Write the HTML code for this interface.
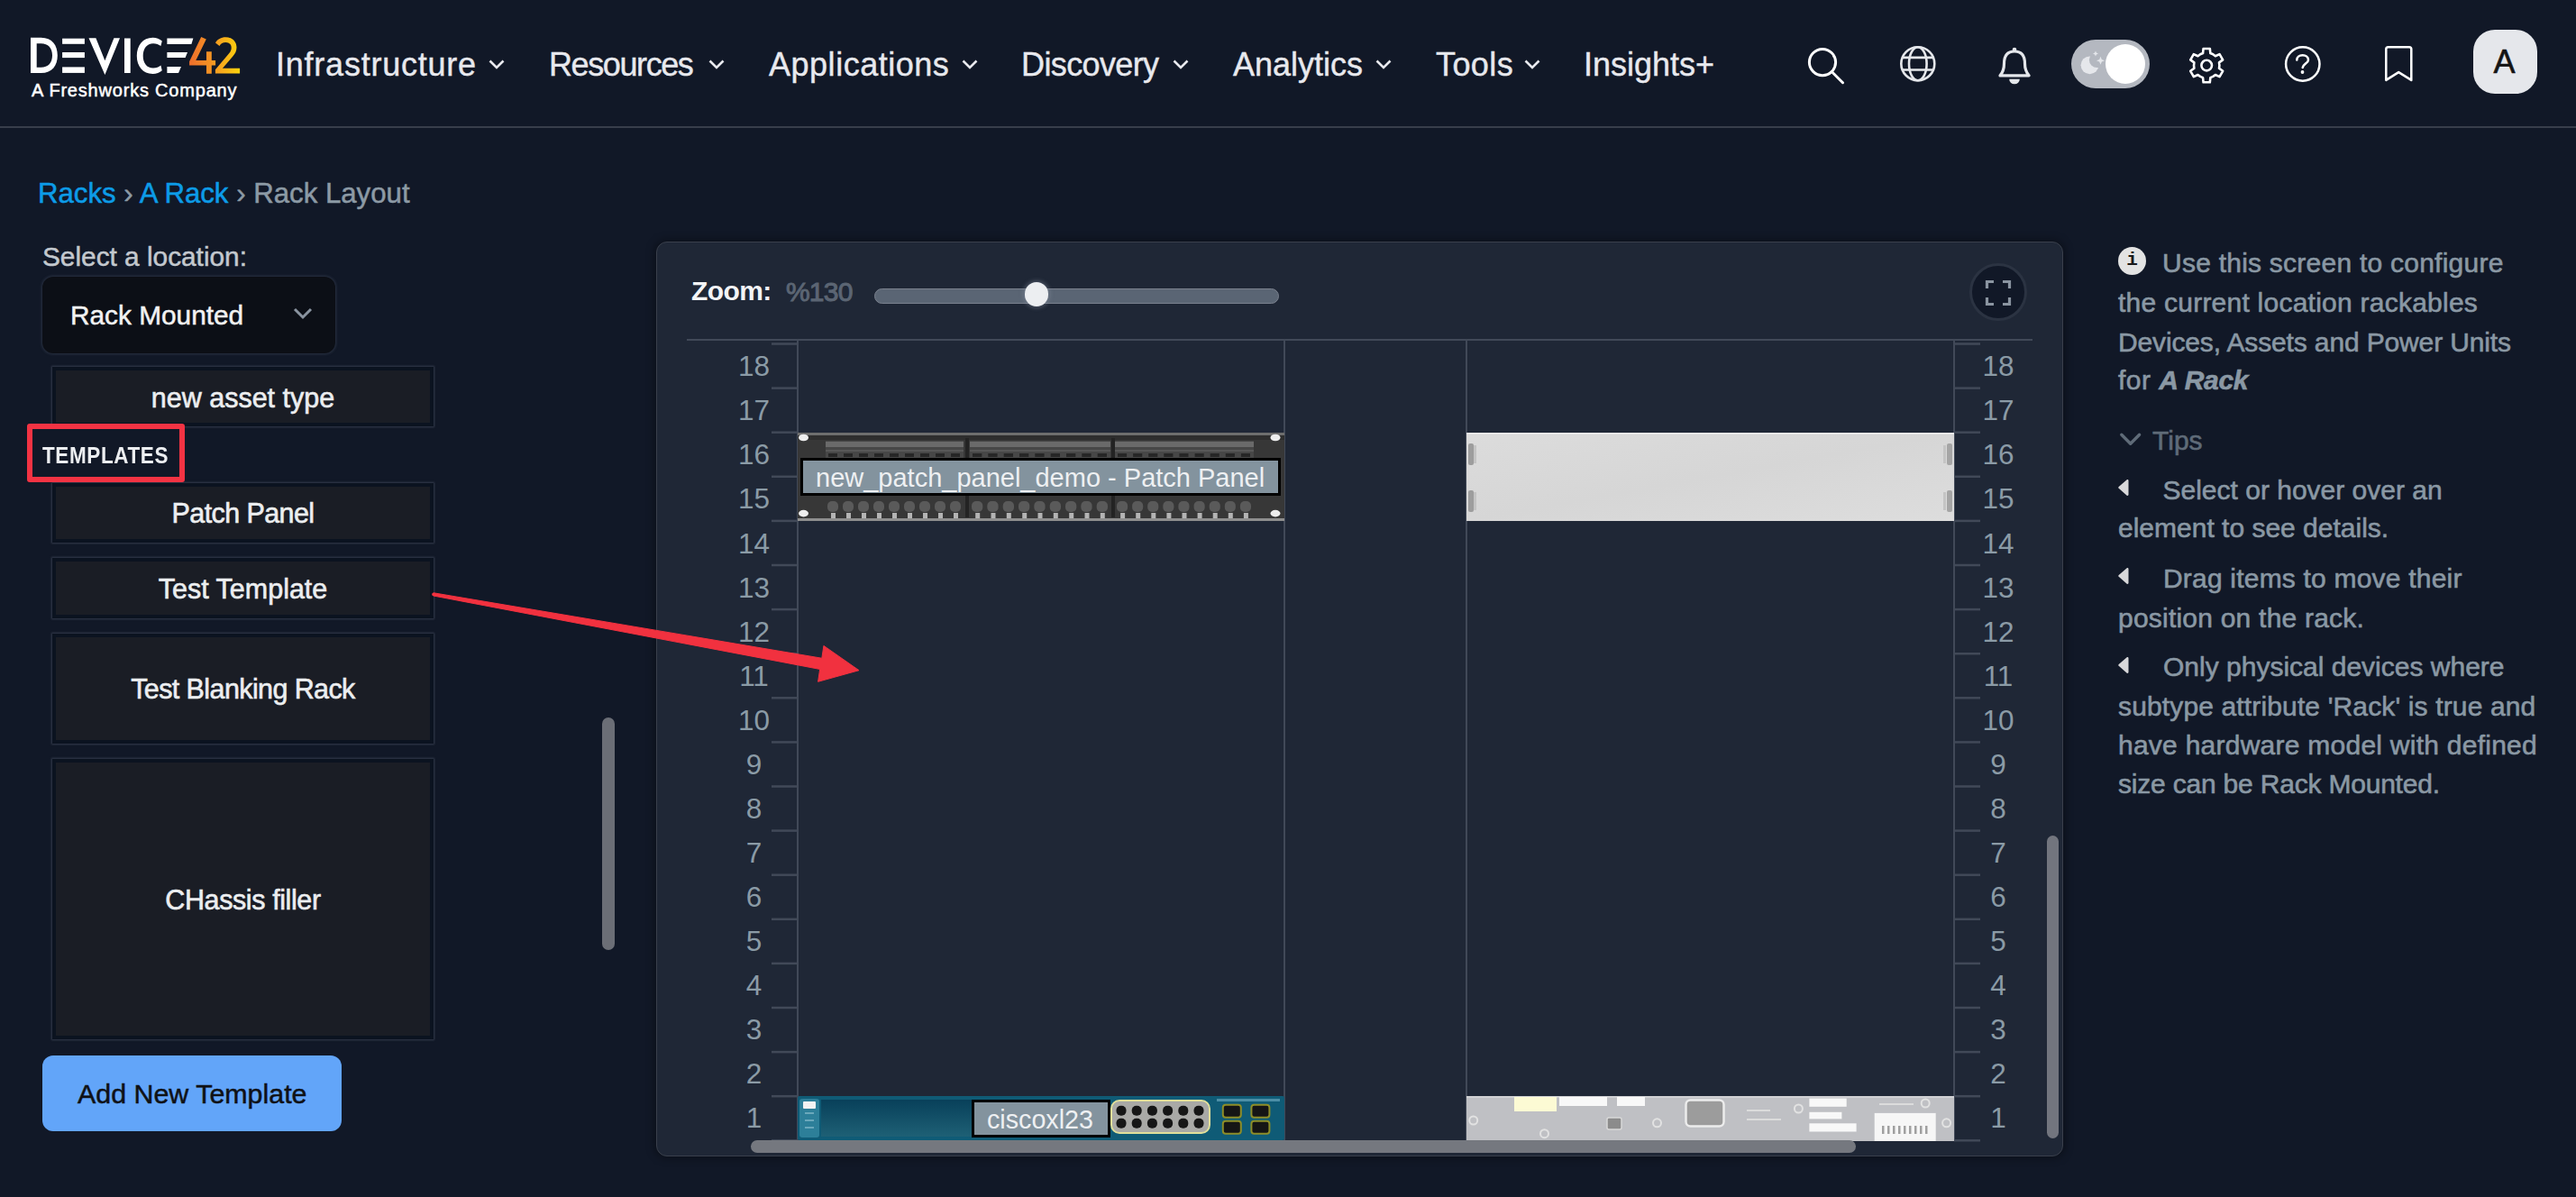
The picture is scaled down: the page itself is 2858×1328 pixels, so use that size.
<!DOCTYPE html>
<html><head><meta charset="utf-8">
<style>
*{box-sizing:border-box;margin:0;padding:0}
html,body{width:2858px;height:1328px;overflow:hidden;background:#111827;font-family:"Liberation Sans",sans-serif}
.a{position:absolute;white-space:nowrap}
.nav{font-size:36px;line-height:36px;color:#e8e9ee;top:53.5px;-webkit-text-stroke-width:0.4px}
.chev{position:absolute;top:66px;width:18px;height:11px}
.hdrline{position:absolute;left:0;top:140px;width:2858px;height:2px;background:#383e4b}
.item{position:absolute;left:58px;width:423px;background:#1a1d25;border:4px solid #0b1320;box-shadow:0 0 2px 1px rgba(85,95,115,0.5)}
.item span{position:absolute;left:0;right:0;text-align:center;font-size:30.5px;line-height:30px;color:#eceef0;white-space:nowrap;-webkit-text-stroke-width:0.6px}
.info{position:absolute;left:2350px;font-size:30px;line-height:30px;color:#8a98a4;white-space:nowrap;-webkit-text-stroke-width:0.6px}
</style></head><body>
<!-- HEADER -->
<svg class="a" style="left:0;top:0" width="280" height="120" viewBox="0 0 280 120">
  <defs><linearGradient id="g42" x1="210" y1="0" x2="266" y2="0" gradientUnits="userSpaceOnUse">
    <stop offset="0" stop-color="#ee6e2c"/><stop offset="0.5" stop-color="#f59a22"/><stop offset="1" stop-color="#fdd30d"/></linearGradient></defs>
  <g fill="#ffffff">
    <path d="M34 41.8h11.5c12.5 0 18.3 8.5 18.3 19.7s-5.8 19.6-18.3 19.6H34z M40.7 48.3v26.5h4.8c8 0 12.5-5.3 12.5-13.3s-4.5-13.2-12.5-13.2z" fill-rule="evenodd"/>
    <rect x="69.1" y="42.7" width="24.8" height="6.1"/>
    <rect x="69.1" y="58" width="24.8" height="6.1"/>
    <rect x="69.1" y="74.4" width="24.8" height="6.5"/>
    <path d="M98.5 42.2h7.9l10 25 10-25h6.6l-16.6 40.8z"/>
    <rect x="138" y="42.5" width="6.7" height="38.5"/>
    <path d="M179.8 45.5c-2.6-2.3-6.4-3.7-10.3-3.7c-11 0-17.7 8.7-17.7 20.1s6.7 20 17.7 20c3.9 0 7.7-1.3 10.3-3.7l-1.4-5.6c-2.2 1.9-5 2.9-8.4 2.9c-7 0-11.3-5.5-11.3-13.6s4.3-13.7 11.3-13.7c3.4 0 6.2 1 8.4 2.9z"/>
    <path d="M185.4 42.6h29l-2 6.3h-27z"/>
    <path d="M185.4 58h22.6l-2.4 6h-20.2z"/>
    <path d="M185.4 74.1h15.6l-3 6.8h-12.6z"/>
  </g>
  <g fill="url(#g42)">
    <path d="M223.2 41l5.6 2.4l-11.5 23.6h11.7v-9.8h5.8v9.8h4.3v5.6h-4.3v9.1h-5.8v-9.1h-18.9v-4.4z"/>
    <path d="M239 47.5c2.3-3.9 6.3-6.2 11.3-6.2c7.6 0 12.2 4.8 12.2 11.3c0 4-1.5 7-4.4 10.2l-11.2 12.9h19.2v5.8h-27.2v-4.2l14.8-17.5c2-2.3 3-4.4 3-6.9c0-3.6-2.5-6-6.4-6c-3.1 0-5.4 1.5-6.8 4z"/>
  </g>
</svg>
<div class="a" id="fresh" style="left:35px;top:90px;font-size:20px;line-height:20px;color:#fff;letter-spacing:0.8px;-webkit-text-stroke-width:0.5px">A Freshworks Company</div>

<div class="a nav" style="left:306px;letter-spacing:0.77px">Infrastructure</div>
<div class="a nav" style="left:609px;letter-spacing:-1.4px">Resources</div>
<div class="a nav" style="left:853px;letter-spacing:0.52px">Applications</div>
<div class="a nav" style="left:1133px;letter-spacing:-0.62px">Discovery</div>
<div class="a nav" style="left:1368px;letter-spacing:0px">Analytics</div>
<div class="a nav" style="left:1593px;letter-spacing:0.4px">Tools</div>
<div class="a nav" style="left:1757px;letter-spacing:0px">Insights+</div>
<svg class="chev" style="left:542px" viewBox="0 0 18 11"><path d="M1.5 1.5l7.5 7.5l7.5-7.5" fill="none" stroke="#e8e9ee" stroke-width="2.6"/></svg>
<svg class="chev" style="left:786px" viewBox="0 0 18 11"><path d="M1.5 1.5l7.5 7.5l7.5-7.5" fill="none" stroke="#e8e9ee" stroke-width="2.6"/></svg>
<svg class="chev" style="left:1067px" viewBox="0 0 18 11"><path d="M1.5 1.5l7.5 7.5l7.5-7.5" fill="none" stroke="#e8e9ee" stroke-width="2.6"/></svg>
<svg class="chev" style="left:1301px" viewBox="0 0 18 11"><path d="M1.5 1.5l7.5 7.5l7.5-7.5" fill="none" stroke="#e8e9ee" stroke-width="2.6"/></svg>
<svg class="chev" style="left:1526px" viewBox="0 0 18 11"><path d="M1.5 1.5l7.5 7.5l7.5-7.5" fill="none" stroke="#e8e9ee" stroke-width="2.6"/></svg>
<svg class="chev" style="left:1691px" viewBox="0 0 18 11"><path d="M1.5 1.5l7.5 7.5l7.5-7.5" fill="none" stroke="#e8e9ee" stroke-width="2.6"/></svg>


<!-- header icons -->
<svg class="a" style="left:1990px;top:40px" width="300" height="70" viewBox="1990 40 300 70">
  <g fill="none" stroke="#ffffff" stroke-width="3" stroke-linecap="round">
    <circle cx="2022" cy="69.1" r="14.6"/>
    <path d="M2033 80.2L2044.5 91.7"/>
  </g>
  <g fill="none" stroke="#e5e7eb" stroke-width="2.6">
    <circle cx="2127.8" cy="70.7" r="18.5"/>
    <ellipse cx="2127.8" cy="70.7" rx="9.8" ry="18.5"/>
    <path d="M2110 63.9H2145.6M2110 77.5H2145.6"/>
  </g>
  <g fill="none" stroke="#e5e7eb" stroke-width="3.2" stroke-linejoin="round">
    <path d="M2223.5 70.5c0-8.6 3.5-13.5 11.5-13.5s11.5 4.9 11.5 13.5c0 5.5 1.2 9.5 4.6 13.4H2219c3.4-3.9 4.5-7.9 4.5-13.4z"/>
  </g>
  <g fill="#e5e7eb">
    <circle cx="2235" cy="55" r="2.3"/>
    <path d="M2229.2 87.8h11.6a5.8 5.5 0 0 1-11.6 0z"/>
  </g>
</svg>
<div class="a" style="left:2298px;top:44px;width:87px;height:54px;border-radius:27px;background:#b4b8c0"></div>
<div class="a" style="left:2336px;top:49px;width:44px;height:44px;border-radius:50%;background:#ffffff"></div>
<svg class="a" style="left:2300px;top:50px" width="40" height="40" viewBox="2300 50 40 40">
  <defs><mask id="mm"><rect x="2300" y="50" width="40" height="40" fill="#fff"/><circle cx="2326.5" cy="66.5" r="8.6" fill="#000"/></mask></defs>
  <circle cx="2318.5" cy="72.3" r="9.9" fill="#e5e7eb" mask="url(#mm)"/>
  <path d="M2325 56.5l0.9 2.1l2.1 0.9l-2.1 0.9l-0.9 2.1l-0.9-2.1l-2.1-0.9l2.1-0.9z" fill="#e5e7eb"/>
  <path d="M2330.5 62.7l1.3 3.2l3.2 1.3l-3.2 1.3l-1.3 3.2l-1.3-3.2l-3.2-1.3l3.2-1.3z" fill="#e5e7eb"/>
</svg>
<svg class="a" style="left:2420px;top:45px" width="160" height="55" viewBox="2420 45 160 55">
  <g fill="none" stroke="#ffffff" stroke-width="2.6" stroke-linejoin="round">
    <path d="M2441.10 60.30 L2444.05 59.02 L2444.57 53.95 L2451.83 53.95 L2452.35 59.02 L2455.30 60.30 L2457.88 62.21 L2462.54 60.13 L2466.16 66.41 L2462.04 69.41 L2462.40 72.60 L2462.04 75.79 L2466.16 78.79 L2462.54 85.07 L2457.88 82.99 L2455.30 84.90 L2452.35 86.18 L2451.83 91.25 L2444.57 91.25 L2444.05 86.18 L2441.10 84.90 L2438.52 82.99 L2433.86 85.07 L2430.24 78.79 L2434.36 75.79 L2434.00 72.60 L2434.36 69.41 L2430.24 66.41 L2433.86 60.13 L2438.52 62.21Z"/>
    <circle cx="2448.2" cy="72.6" r="5.8"/>
  </g>
  <g fill="none" stroke="#ffffff" stroke-width="2.5" stroke-linecap="round">
    <circle cx="2554.8" cy="71" r="18.7"/>
    <path d="M2548.3 66.5c0-3.2 2.6-5.2 6.4-5.2c3.6 0 6.3 2.1 6.3 5.1c0 3.8-5.8 4.4-6.3 8.6"/>
  </g>
  <circle cx="2554.5" cy="80" r="1.9" fill="#ffffff"/>
</svg>
<svg class="a" style="left:2640px;top:45px" width="45" height="52" viewBox="2640 45 45 52">
  <path d="M2647.3 88.9V54.5a2.3 2.3 0 0 1 2.3-2.3h23.4a2.3 2.3 0 0 1 2.3 2.3V88.9L2661.2 80.1z" fill="none" stroke="#ffffff" stroke-width="2.5" stroke-linejoin="round"/>
</svg>
<div class="a" style="left:2744px;top:33px;width:71px;height:71px;border-radius:24px;background:#e5e7eb"></div>
<div class="a" style="left:2743px;top:50.5px;width:71px;text-align:center;font-size:36px;line-height:36px;color:#141414;-webkit-text-stroke-width:0.6px">A</div>
<div class="hdrline"></div>

<!-- BREADCRUMB -->
<div class="a" style="left:42px;top:199px;font-size:31.2px;line-height:31.2px;color:#0c9ce8;-webkit-text-stroke-width:0.5px">Racks <span style="color:#8c9aa5">›</span> A Rack <span style="color:#8c9aa5">› Rack Layout</span></div>

<!-- LEFT PANEL -->
<div class="a" style="left:47px;top:270px;font-size:29.8px;line-height:29.8px;color:#c3c8ce;-webkit-text-stroke-width:0.5px">Select a location:</div>
<div class="a" style="left:47px;top:307px;width:325px;height:85px;border-radius:12px;background:#0c0f16;box-shadow:0 0 3px 1px rgba(90,100,120,0.35)"></div>
<div class="a" style="left:78px;top:335px;font-size:29.8px;line-height:29.8px;color:#f2f2f2;-webkit-text-stroke-width:0.5px">Rack Mounted</div>
<svg class="a" style="left:324px;top:340px" width="24" height="18" viewBox="0 0 24 18"><path d="M3 3l9 9l9-9" fill="none" stroke="#8a94a0" stroke-width="3"/></svg>

<div class="item" style="top:407px;height:66px"><span style="top:15px">new asset type</span></div>
<div class="item" style="top:536px;height:66px"><span style="top:14px;letter-spacing:-0.6px">Patch Panel</span></div>
<div class="item" style="top:619px;height:67px"><span style="top:15px">Test Template</span></div>
<div class="item" style="top:703px;height:122px"><span style="top:42px;letter-spacing:-0.6px">Test Blanking Rack</span></div>
<div class="item" style="top:842px;height:311px"><span style="top:137px;letter-spacing:-0.4px">CHassis filler</span></div>

<div class="a" style="left:30px;top:470px;width:175px;height:65px;border:6px solid #f43343;border-radius:3px"></div>
<div class="a" style="left:47px;top:495px;font-size:22.5px;line-height:24px;font-weight:bold;color:#f3f4f6;letter-spacing:0.6px;transform:scaleY(1.12);transform-origin:0 20px;color:#eceef1">TEMPLATES</div>

<div class="a" style="left:47px;top:1171px;width:332px;height:84px;border-radius:12px;background:#62a5f9"></div>
<div class="a" style="left:86px;top:1198px;font-size:30.4px;line-height:30.4px;color:#0f1115;-webkit-text-stroke-width:0.5px">Add New Template</div>

<div class="a" style="left:668px;top:796px;width:14px;height:258px;border-radius:7px;background:#6b6e76"></div>

<!-- RACK PANEL -->
<div class="a" style="left:728px;top:268px;width:1561px;height:1015px;border-radius:12px;background:#1f2736;border:1px solid #3a404c;box-shadow:0 0 10px 2px rgba(0,0,0,0.35)"></div>
<div class="a" style="left:767px;top:307.5px;font-size:30px;line-height:30px;font-weight:bold;color:#f3f4f6;letter-spacing:-0.6px">Zoom:</div>
<div class="a" style="left:872px;top:309px;font-size:30px;line-height:30px;color:#5b6573;-webkit-text-stroke-width:1px;letter-spacing:-0.8px">%130</div>
<div class="a" style="left:970px;top:320px;width:449px;height:17px;border-radius:9px;background:#5a6574;border:1.5px solid #7a818e"></div>
<div class="a" style="left:1136.5px;top:313px;width:26.5px;height:26.5px;border-radius:50%;background:#eceef1;box-shadow:0 0 4px 2px rgba(140,150,165,0.35)"></div>
<div class="a" style="left:2185px;top:292px;width:64px;height:64px;border-radius:50%;background:#111827;border:3px solid #2b3342"></div>
<svg class="a" style="left:2200px;top:308px" width="34" height="34" viewBox="0 0 34 34"><path d="M4.5 12V4.5H12M22 4.5H29.5V12M29.5 22V29.5H22M12 29.5H4.5V22" fill="none" stroke="#8a94a0" stroke-width="3.2"/></svg>
<svg class="a" style="left:0;top:0" width="2858" height="1328" viewBox="0 0 2858 1328">
<g fill="#414958">
<rect x="762" y="376" width="1493" height="2"/>
<rect x="884" y="378" width="2" height="888"/>
<rect x="1424" y="378" width="2" height="888"/>
<rect x="1626" y="378" width="2" height="888"/>
<rect x="2167" y="378" width="2" height="888"/>
<rect x="856" y="380.25" width="29" height="2.5"/>
<rect x="2168" y="380.25" width="29" height="2.5"/>
<rect x="856" y="429.35" width="29" height="2.5"/>
<rect x="2168" y="429.35" width="29" height="2.5"/>
<rect x="856" y="478.45" width="29" height="2.5"/>
<rect x="2168" y="478.45" width="29" height="2.5"/>
<rect x="856" y="527.55" width="29" height="2.5"/>
<rect x="2168" y="527.55" width="29" height="2.5"/>
<rect x="856" y="576.65" width="29" height="2.5"/>
<rect x="2168" y="576.65" width="29" height="2.5"/>
<rect x="856" y="625.75" width="29" height="2.5"/>
<rect x="2168" y="625.75" width="29" height="2.5"/>
<rect x="856" y="674.85" width="29" height="2.5"/>
<rect x="2168" y="674.85" width="29" height="2.5"/>
<rect x="856" y="723.95" width="29" height="2.5"/>
<rect x="2168" y="723.95" width="29" height="2.5"/>
<rect x="856" y="773.05" width="29" height="2.5"/>
<rect x="2168" y="773.05" width="29" height="2.5"/>
<rect x="856" y="822.15" width="29" height="2.5"/>
<rect x="2168" y="822.15" width="29" height="2.5"/>
<rect x="856" y="871.25" width="29" height="2.5"/>
<rect x="2168" y="871.25" width="29" height="2.5"/>
<rect x="856" y="920.35" width="29" height="2.5"/>
<rect x="2168" y="920.35" width="29" height="2.5"/>
<rect x="856" y="969.45" width="29" height="2.5"/>
<rect x="2168" y="969.45" width="29" height="2.5"/>
<rect x="856" y="1018.55" width="29" height="2.5"/>
<rect x="2168" y="1018.55" width="29" height="2.5"/>
<rect x="856" y="1067.65" width="29" height="2.5"/>
<rect x="2168" y="1067.65" width="29" height="2.5"/>
<rect x="856" y="1116.75" width="29" height="2.5"/>
<rect x="2168" y="1116.75" width="29" height="2.5"/>
<rect x="856" y="1165.85" width="29" height="2.5"/>
<rect x="2168" y="1165.85" width="29" height="2.5"/>
<rect x="856" y="1214.95" width="29" height="2.5"/>
<rect x="2168" y="1214.95" width="29" height="2.5"/>
<rect x="856" y="1264.05" width="29" height="2.5"/>
<rect x="2168" y="1264.05" width="29" height="2.5"/>
</g>
<g fill="#8b9ba6" font-family="Liberation Sans" font-size="31.5" text-anchor="middle">
<text x="836.5" y="417.30">18</text>
<text x="2217" y="417.30">18</text>
<text x="836.5" y="466.36">17</text>
<text x="2217" y="466.36">17</text>
<text x="836.5" y="515.42">16</text>
<text x="2217" y="515.42">16</text>
<text x="836.5" y="564.48">15</text>
<text x="2217" y="564.48">15</text>
<text x="836.5" y="613.54">14</text>
<text x="2217" y="613.54">14</text>
<text x="836.5" y="662.60">13</text>
<text x="2217" y="662.60">13</text>
<text x="836.5" y="711.66">12</text>
<text x="2217" y="711.66">12</text>
<text x="836.5" y="760.72">11</text>
<text x="2217" y="760.72">11</text>
<text x="836.5" y="809.78">10</text>
<text x="2217" y="809.78">10</text>
<text x="836.5" y="858.84">9</text>
<text x="2217" y="858.84">9</text>
<text x="836.5" y="907.90">8</text>
<text x="2217" y="907.90">8</text>
<text x="836.5" y="956.96">7</text>
<text x="2217" y="956.96">7</text>
<text x="836.5" y="1006.02">6</text>
<text x="2217" y="1006.02">6</text>
<text x="836.5" y="1055.08">5</text>
<text x="2217" y="1055.08">5</text>
<text x="836.5" y="1104.14">4</text>
<text x="2217" y="1104.14">4</text>
<text x="836.5" y="1153.20">3</text>
<text x="2217" y="1153.20">3</text>
<text x="836.5" y="1202.26">2</text>
<text x="2217" y="1202.26">2</text>
<text x="836.5" y="1251.32">1</text>
<text x="2217" y="1251.32">1</text>
</g></svg>
<!-- devices -->
<svg class="a" style="left:885px;top:480px" width="540" height="98" viewBox="0 0 540 98">
<rect width="540" height="98" fill="#373737"/>
<rect x="0" y="0" width="540" height="3" fill="#6e6e6e"/>
<rect x="0" y="95" width="540" height="3" fill="#8e8e8e"/>
<rect x="0" y="3" width="540" height="5" fill="#2e2e2e"/>
<rect x="31" y="9" width="153" height="19" fill="#474747"/>
<rect x="31" y="10" width="153" height="6" fill="#6a6a6a"/>
<rect x="31" y="19" width="153" height="2" fill="#585858"/>
<rect x="34.0" y="23" width="10.0" height="4" fill="#262626"/>
<rect x="33.0" y="76" width="12.0" height="12" rx="5" fill="#5a5a5a"/>
<rect x="37.0" y="89" width="5" height="6" fill="#b4b4b4"/>
<rect x="51.0" y="23" width="10.0" height="4" fill="#262626"/>
<rect x="50.0" y="76" width="12.0" height="12" rx="5" fill="#5a5a5a"/>
<rect x="54.0" y="89" width="5" height="6" fill="#b4b4b4"/>
<rect x="68.0" y="23" width="10.0" height="4" fill="#262626"/>
<rect x="67.0" y="76" width="12.0" height="12" rx="5" fill="#5a5a5a"/>
<rect x="71.0" y="89" width="5" height="6" fill="#b4b4b4"/>
<rect x="85.0" y="23" width="10.0" height="4" fill="#262626"/>
<rect x="84.0" y="76" width="12.0" height="12" rx="5" fill="#5a5a5a"/>
<rect x="88.0" y="89" width="5" height="6" fill="#b4b4b4"/>
<rect x="102.0" y="23" width="10.0" height="4" fill="#262626"/>
<rect x="101.0" y="76" width="12.0" height="12" rx="5" fill="#5a5a5a"/>
<rect x="105.0" y="89" width="5" height="6" fill="#b4b4b4"/>
<rect x="119.0" y="23" width="10.0" height="4" fill="#262626"/>
<rect x="118.0" y="76" width="12.0" height="12" rx="5" fill="#5a5a5a"/>
<rect x="122.0" y="89" width="5" height="6" fill="#b4b4b4"/>
<rect x="136.0" y="23" width="10.0" height="4" fill="#262626"/>
<rect x="135.0" y="76" width="12.0" height="12" rx="5" fill="#5a5a5a"/>
<rect x="139.0" y="89" width="5" height="6" fill="#b4b4b4"/>
<rect x="153.0" y="23" width="10.0" height="4" fill="#262626"/>
<rect x="152.0" y="76" width="12.0" height="12" rx="5" fill="#5a5a5a"/>
<rect x="156.0" y="89" width="5" height="6" fill="#b4b4b4"/>
<rect x="170.0" y="23" width="10.0" height="4" fill="#262626"/>
<rect x="169.0" y="76" width="12.0" height="12" rx="5" fill="#5a5a5a"/>
<rect x="173.0" y="89" width="5" height="6" fill="#b4b4b4"/>
<rect x="191" y="9" width="156" height="19" fill="#474747"/>
<rect x="191" y="10" width="156" height="6" fill="#6a6a6a"/>
<rect x="191" y="19" width="156" height="2" fill="#585858"/>
<rect x="194.0" y="23" width="10.3" height="4" fill="#262626"/>
<rect x="193.0" y="76" width="12.3" height="12" rx="5" fill="#5a5a5a"/>
<rect x="197.2" y="89" width="5" height="6" fill="#b4b4b4"/>
<rect x="211.3" y="23" width="10.3" height="4" fill="#262626"/>
<rect x="210.3" y="76" width="12.3" height="12" rx="5" fill="#5a5a5a"/>
<rect x="214.5" y="89" width="5" height="6" fill="#b4b4b4"/>
<rect x="228.7" y="23" width="10.3" height="4" fill="#262626"/>
<rect x="227.7" y="76" width="12.3" height="12" rx="5" fill="#5a5a5a"/>
<rect x="231.8" y="89" width="5" height="6" fill="#b4b4b4"/>
<rect x="246.0" y="23" width="10.3" height="4" fill="#262626"/>
<rect x="245.0" y="76" width="12.3" height="12" rx="5" fill="#5a5a5a"/>
<rect x="249.2" y="89" width="5" height="6" fill="#b4b4b4"/>
<rect x="263.3" y="23" width="10.3" height="4" fill="#262626"/>
<rect x="262.3" y="76" width="12.3" height="12" rx="5" fill="#5a5a5a"/>
<rect x="266.5" y="89" width="5" height="6" fill="#b4b4b4"/>
<rect x="280.7" y="23" width="10.3" height="4" fill="#262626"/>
<rect x="279.7" y="76" width="12.3" height="12" rx="5" fill="#5a5a5a"/>
<rect x="283.8" y="89" width="5" height="6" fill="#b4b4b4"/>
<rect x="298.0" y="23" width="10.3" height="4" fill="#262626"/>
<rect x="297.0" y="76" width="12.3" height="12" rx="5" fill="#5a5a5a"/>
<rect x="301.2" y="89" width="5" height="6" fill="#b4b4b4"/>
<rect x="315.3" y="23" width="10.3" height="4" fill="#262626"/>
<rect x="314.3" y="76" width="12.3" height="12" rx="5" fill="#5a5a5a"/>
<rect x="318.5" y="89" width="5" height="6" fill="#b4b4b4"/>
<rect x="332.7" y="23" width="10.3" height="4" fill="#262626"/>
<rect x="331.7" y="76" width="12.3" height="12" rx="5" fill="#5a5a5a"/>
<rect x="335.8" y="89" width="5" height="6" fill="#b4b4b4"/>
<rect x="352" y="9" width="154" height="19" fill="#474747"/>
<rect x="352" y="10" width="154" height="6" fill="#6a6a6a"/>
<rect x="352" y="19" width="154" height="2" fill="#585858"/>
<rect x="355.0" y="23" width="10.1" height="4" fill="#262626"/>
<rect x="354.0" y="76" width="12.1" height="12" rx="5" fill="#5a5a5a"/>
<rect x="358.1" y="89" width="5" height="6" fill="#b4b4b4"/>
<rect x="372.1" y="23" width="10.1" height="4" fill="#262626"/>
<rect x="371.1" y="76" width="12.1" height="12" rx="5" fill="#5a5a5a"/>
<rect x="375.2" y="89" width="5" height="6" fill="#b4b4b4"/>
<rect x="389.2" y="23" width="10.1" height="4" fill="#262626"/>
<rect x="388.2" y="76" width="12.1" height="12" rx="5" fill="#5a5a5a"/>
<rect x="392.3" y="89" width="5" height="6" fill="#b4b4b4"/>
<rect x="406.3" y="23" width="10.1" height="4" fill="#262626"/>
<rect x="405.3" y="76" width="12.1" height="12" rx="5" fill="#5a5a5a"/>
<rect x="409.4" y="89" width="5" height="6" fill="#b4b4b4"/>
<rect x="423.4" y="23" width="10.1" height="4" fill="#262626"/>
<rect x="422.4" y="76" width="12.1" height="12" rx="5" fill="#5a5a5a"/>
<rect x="426.5" y="89" width="5" height="6" fill="#b4b4b4"/>
<rect x="440.6" y="23" width="10.1" height="4" fill="#262626"/>
<rect x="439.6" y="76" width="12.1" height="12" rx="5" fill="#5a5a5a"/>
<rect x="443.6" y="89" width="5" height="6" fill="#b4b4b4"/>
<rect x="457.7" y="23" width="10.1" height="4" fill="#262626"/>
<rect x="456.7" y="76" width="12.1" height="12" rx="5" fill="#5a5a5a"/>
<rect x="460.7" y="89" width="5" height="6" fill="#b4b4b4"/>
<rect x="474.8" y="23" width="10.1" height="4" fill="#262626"/>
<rect x="473.8" y="76" width="12.1" height="12" rx="5" fill="#5a5a5a"/>
<rect x="477.8" y="89" width="5" height="6" fill="#b4b4b4"/>
<rect x="491.9" y="23" width="10.1" height="4" fill="#262626"/>
<rect x="490.9" y="76" width="12.1" height="12" rx="5" fill="#5a5a5a"/>
<rect x="494.9" y="89" width="5" height="6" fill="#b4b4b4"/>
<rect x="186" y="6" width="4" height="88" fill="#232323"/>
<rect x="348" y="6" width="4" height="88" fill="#232323"/>
<ellipse cx="6.5" cy="5.5" rx="5.5" ry="3.8" fill="#eeeeee"/>
<ellipse cx="530" cy="5.5" rx="5.5" ry="3.8" fill="#eeeeee"/>
<ellipse cx="6.5" cy="89.6" rx="5.5" ry="3.8" fill="#eeeeee"/>
<ellipse cx="530" cy="89.6" rx="5.5" ry="3.8" fill="#eeeeee"/>
</svg>
<div class="a" style="left:888px;top:508px;width:533px;height:42px;background:#83939e;border:3px solid #000"></div>
<div class="a" style="left:905px;top:516px;font-size:29px;line-height:29px;color:#eef0f2">new_patch_panel_demo - Patch Panel</div>
<svg class="a" style="left:1627px;top:480px" width="541" height="98" viewBox="0 0 541 98">
<defs><linearGradient id="bg1" x1="0" y1="0" x2="1" y2="1"><stop offset="0" stop-color="#dcdcdc"/><stop offset="0.5" stop-color="#d6d6d6"/><stop offset="1" stop-color="#dddddd"/></linearGradient></defs>
<rect width="541" height="98" fill="url(#bg1)"/>
<rect x="0" y="0" width="541" height="2" fill="#e8e8e8"/>
<rect x="2" y="12" width="6" height="24" rx="2" fill="#9d9d9d"/><rect x="2" y="64" width="6" height="24" rx="2" fill="#9d9d9d"/>
<rect x="8" y="14" width="3" height="20" fill="#c4c4c4"/><rect x="8" y="66" width="3" height="20" fill="#c4c4c4"/>
<rect x="533" y="12" width="6" height="24" rx="2" fill="#a5a5a5"/><rect x="533" y="64" width="6" height="24" rx="2" fill="#a5a5a5"/>
<rect x="529" y="14" width="3" height="20" fill="#c4c4c4"/><rect x="529" y="66" width="3" height="20" fill="#c4c4c4"/>
</svg>
<svg class="a" style="left:885px;top:1216px" width="540" height="49" viewBox="0 0 540 49">
<defs><linearGradient id="cg" x1="0" y1="0" x2="0" y2="1"><stop offset="0" stop-color="#08405a"/><stop offset="1" stop-color="#1e6075"/></linearGradient></defs>
<rect width="540" height="49" rx="2" fill="#0f5b76"/>
<rect x="2" y="3" width="22" height="43" rx="3" fill="#2d7f99"/>
<rect x="6" y="6" width="14" height="8" rx="1" fill="#f2f2f2"/>
<rect x="8" y="18" width="10" height="2" fill="#6aa8bb"/><rect x="8" y="26" width="10" height="2" fill="#6aa8bb"/><rect x="8" y="34" width="10" height="2" fill="#6aa8bb"/>
<rect x="26" y="4" width="168" height="41" fill="url(#cg)"/>
<rect x="348" y="5" width="109" height="36" rx="9" fill="#a9a9a6" stroke="#e0df9a" stroke-width="2"/>
<rect x="353.5" y="10.7" width="11" height="11" rx="5" fill="#161616"/>
<rect x="370.7" y="10.7" width="11" height="11" rx="5" fill="#161616"/>
<rect x="387.9" y="10.7" width="11" height="11" rx="5" fill="#161616"/>
<rect x="405.1" y="10.7" width="11" height="11" rx="5" fill="#161616"/>
<rect x="422.3" y="10.7" width="11" height="11" rx="5" fill="#161616"/>
<rect x="439.5" y="10.7" width="11" height="11" rx="5" fill="#161616"/>
<rect x="353.5" y="24.8" width="11" height="11" rx="5" fill="#161616"/>
<rect x="370.7" y="24.8" width="11" height="11" rx="5" fill="#161616"/>
<rect x="387.9" y="24.8" width="11" height="11" rx="5" fill="#161616"/>
<rect x="405.1" y="24.8" width="11" height="11" rx="5" fill="#161616"/>
<rect x="422.3" y="24.8" width="11" height="11" rx="5" fill="#161616"/>
<rect x="439.5" y="24.8" width="11" height="11" rx="5" fill="#161616"/>
<rect x="471.8" y="9.7" width="20" height="14" rx="3" fill="#151515" stroke="#8d8d28" stroke-width="2"/>
<rect x="471.8" y="27.7" width="20" height="14" rx="3" fill="#151515" stroke="#8d8d28" stroke-width="2"/>
<rect x="503.4" y="9.7" width="20" height="14" rx="3" fill="#151515" stroke="#8d8d28" stroke-width="2"/>
<rect x="503.4" y="27.7" width="20" height="14" rx="3" fill="#151515" stroke="#8d8d28" stroke-width="2"/>
<rect x="465" y="3" width="70" height="3" fill="#4c8fa6"/>
</svg>
<div class="a" style="left:1078px;top:1220px;width:154px;height:42px;background:#83939e;border:3px solid #000"></div>
<div class="a" style="left:1095px;top:1228px;font-size:28.7px;line-height:29px;color:#eef0f2">ciscoxl23</div>
<svg class="a" style="left:1627px;top:1216px" width="541" height="50" viewBox="0 0 541 50">
<rect width="541" height="50" fill="#bfc0c4"/>
<rect x="0" y="0" width="541" height="2" fill="#d0d1d4"/>
<rect x="53" y="1" width="47" height="16" fill="#fcfad4"/>
<rect x="103" y="1" width="53" height="10" fill="#f8f8f8"/>
<rect x="167" y="1" width="31" height="10" fill="#f8f8f8"/>
<circle cx="7.7" cy="27" r="4.5" fill="none" stroke="#e2e2e2" stroke-width="2"/>
<circle cx="86.5" cy="41.7" r="4.5" fill="none" stroke="#e2e2e2" stroke-width="2"/>
<circle cx="211.5" cy="29.8" r="4.5" fill="none" stroke="#e2e2e2" stroke-width="2"/>
<rect x="156" y="24" width="16" height="13" rx="2" fill="#8b8b8b" stroke="#d8d8d8" stroke-width="1.5"/>
<rect x="243.5" y="4.5" width="42" height="29" rx="5" fill="#9c9c9c" stroke="#ececec" stroke-width="2.5"/>
<rect x="311" y="15" width="26" height="2" fill="#dcdcdc"/><rect x="311" y="25" width="38" height="2" fill="#dcdcdc"/>
<circle cx="368.4" cy="14" r="4.5" fill="none" stroke="#e2e2e2" stroke-width="2"/>
<rect x="380.4" y="2.6" width="41.3" height="9.2" fill="#f8f8f8"/>
<rect x="380.4" y="17.8" width="36" height="7.6" fill="#f8f8f8"/>
<rect x="380.4" y="30.3" width="52.2" height="9.2" fill="#f8f8f8"/>
<rect x="452.7" y="18.9" width="68" height="31" fill="#f6f6f6"/>
<g fill="#a0a0a0"><rect x="461" y="33" width="2.5" height="9"/><rect x="467" y="33" width="2.5" height="9"/><rect x="473" y="33" width="2.5" height="9"/><rect x="479" y="33" width="2.5" height="9"/><rect x="485" y="33" width="2.5" height="9"/><rect x="491" y="33" width="2.5" height="9"/><rect x="497" y="33" width="2.5" height="9"/><rect x="503" y="33" width="2.5" height="9"/><rect x="509" y="33" width="2.5" height="9"/></g>
<rect x="458" y="8" width="38" height="2" fill="#dcdcdc"/>
<circle cx="509.2" cy="8" r="4.5" fill="none" stroke="#e2e2e2" stroke-width="2"/>
<circle cx="532.6" cy="29.8" r="4.5" fill="none" stroke="#e2e2e2" stroke-width="2"/>
</svg>
<!-- scrollbars -->
<div class="a" style="left:833px;top:1265px;width:1226px;height:14px;border-radius:7px;background:#75787f"></div>
<div class="a" style="left:2271px;top:927px;width:13px;height:336px;border-radius:6.5px;background:#72757e"></div>
<svg class="a" style="left:0;top:0" width="2858" height="1328" viewBox="0 0 2858 1328"><path d="M481.28 657.82 L911.84 730.25 L913.90 716.40 L953.00 743.70 L907.60 756.30 L909.66 742.45 L480.72 660.98Z" fill="#f1313f" stroke="#f1313f" stroke-width="1" stroke-linejoin="round"/><circle cx="481" cy="659.4" r="1.8" fill="#f1313f"/></svg>
<!-- INFO -->
<div class="a" style="left:2350px;top:274px;width:31px;height:31px;border-radius:50%;background:#e3e3e3"></div>
<div class="a" style="left:2350px;top:278px;width:31px;text-align:center;font-family:'Liberation Mono',monospace;font-weight:bold;font-size:21px;line-height:22px;color:#1a1a1a">i</div>
<div class="info" style="left:2399px;top:277.4px;letter-spacing:0.24px">Use this screen to configure</div>
<div class="info" style="top:320.7px;letter-spacing:0.24px">the current location rackables</div>
<div class="info" style="top:365.4px;letter-spacing:-0.14px">Devices, Assets and Power Units</div>
<div class="info" style="top:407.2px;letter-spacing:0.5px">for <b><i style="letter-spacing:-0.3px">A Rack</i></b></div>
<svg class="a" style="left:2350px;top:478px" width="28" height="20" viewBox="0 0 28 20"><path d="M3.8 4.3L13.7 14.2L23.6 4.3" fill="none" stroke="#5f6b78" stroke-width="3.4" stroke-linecap="round" stroke-linejoin="round"/></svg>
<div class="info" style="left:2388px;top:473.7px;color:#5f6b78">Tips</div>
<svg class="a" style="left:2348px;top:528px" width="16" height="24" viewBox="0 0 16 24"><path d="M13.5 3.2v17.6c0 1-1.1 1.5-1.8 0.9l-9-8c-0.6-0.5-0.6-1.3 0-1.8l9-7.6c0.7-0.6 1.8-0.1 1.8 0.9z" fill="#d8d8da"/></svg>
<svg class="a" style="left:2348px;top:626px" width="16" height="24" viewBox="0 0 16 24"><path d="M13.5 3.2v17.6c0 1-1.1 1.5-1.8 0.9l-9-8c-0.6-0.5-0.6-1.3 0-1.8l9-7.6c0.7-0.6 1.8-0.1 1.8 0.9z" fill="#d8d8da"/></svg>
<svg class="a" style="left:2348px;top:725px" width="16" height="24" viewBox="0 0 16 24"><path d="M13.5 3.2v17.6c0 1-1.1 1.5-1.8 0.9l-9-8c-0.6-0.5-0.6-1.3 0-1.8l9-7.6c0.7-0.6 1.8-0.1 1.8 0.9z" fill="#d8d8da"/></svg>
<div class="info" style="left:2399.5px;top:528.7px">Select or hover over an</div>
<div class="info" style="top:571.1px">element to see details.</div>
<div class="info" style="left:2400px;top:626.5px;letter-spacing:0.2px">Drag items to move their</div>
<div class="info" style="top:671.2px;letter-spacing:0.22px">position on the rack.</div>
<div class="info" style="left:2400px;top:724.8px">Only physical devices where</div>
<div class="info" style="top:768.9px;letter-spacing:0.14px">subtype attribute 'Rack' is true and</div>
<div class="info" style="top:812.0px;letter-spacing:0.25px">have hardware model with defined</div>
<div class="info" style="top:855.2px;letter-spacing:-0.2px">size can be Rack Mounted.</div>
</body></html>
